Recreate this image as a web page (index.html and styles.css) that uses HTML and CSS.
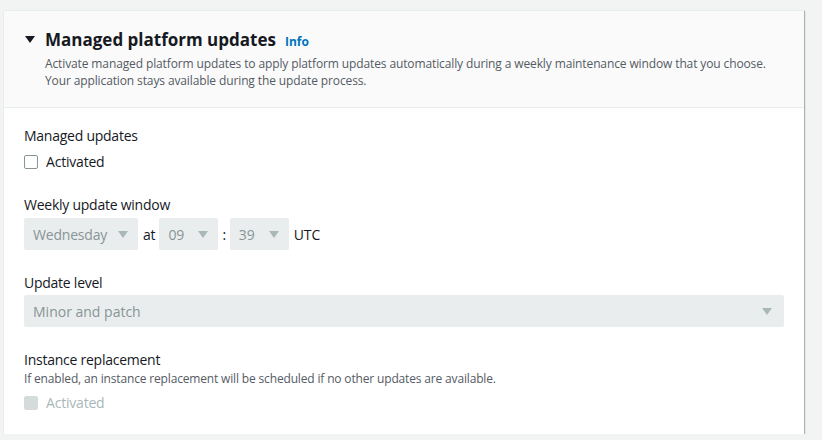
FILE: index.html
```html
<!DOCTYPE html>
<html>
<head>
<meta charset="utf-8">
<link rel="stylesheet" href="styles.css">
</head>
<body>
<div class="page">
  <section class="card">
    <header class="card-header">
      <div class="title-row">
        <svg class="caret" width="10" height="8" viewBox="0 0 10 8"><polygon points="0,0 10,0 5,7" fill="#16191f"/></svg>
        <h2 class="title">Managed platform updates</h2>
        <a class="info">Info</a>
      </div>
      <p class="desc">Activate managed platform updates to apply platform updates automatically during a weekly maintenance window that you choose.<br>Your application stays available during the update process.</p>
    </header>
    <div class="card-body">
      <div class="field">
        <div class="label">Managed updates</div>
        <label class="check">
          <span class="box"></span>
          <span>Activated</span>
        </label>
      </div>
      <div class="field">
        <div class="label">Weekly update window</div>
        <div class="window-row">
          <div class="select sel-day"><span>Wednesday</span><svg class="chev" width="10" height="7" viewBox="0 0 10 7"><polygon points="0,0 10,0 5,7" fill="#aab7b8"/></svg></div>
          <span class="sep">at</span>
          <div class="select sel-num"><span>09</span><svg class="chev" width="10" height="7" viewBox="0 0 10 7"><polygon points="0,0 10,0 5,7" fill="#aab7b8"/></svg></div>
          <span class="sep sep-colon">:</span>
          <div class="select sel-num"><span>39</span><svg class="chev" width="10" height="7" viewBox="0 0 10 7"><polygon points="0,0 10,0 5,7" fill="#aab7b8"/></svg></div>
          <span class="sep">UTC</span>
        </div>
      </div>
      <div class="field">
        <div class="label">Update level</div>
        <div class="select sel-full"><span>Minor and patch</span><svg class="chev" width="10" height="7" viewBox="0 0 10 7"><polygon points="0,0 10,0 5,7" fill="#aab7b8"/></svg></div>
      </div>
      <div class="field last">
        <div class="label">Instance replacement</div>
        <div class="hint">If enabled, an instance replacement will be scheduled if no other updates are available.</div>
        <label class="check disabled">
          <span class="box"></span>
          <span>Activated</span>
        </label>
      </div>
    </div>
  </section>
</div>
</body>
</html>
```

FILE: styles.css
```css
html, body {
  margin: 0;
  padding: 0;
  background: #f2f3f3;
  font-family: "Open Sans", "Liberation Sans", sans-serif;
  color: #16191f;
}
.page {
  padding: 10px 0 0 3px;
}
.card {
  width: 801px;
  background: #fff;
  border-top: 1px solid #eaeded;
  border-left: 1px solid #eaeded;
  box-sizing: border-box;
  box-shadow: 1px 1px 1px 0 rgba(0, 28, 36, 0.3);
}
.card-header {
  background: #fafafa;
  border-bottom: 1px solid #eaeded;
  padding: 16px 20px 18px 20px;
}
.title-row {
  display: flex;
  align-items: center;
}
.caret {
  margin: 0 10px 0 1px;
}
.title {
  margin: 0;
  font-size: 17px;
  font-weight: 700;
  line-height: 26px;
}
.info {
  font-size: 12px;
  font-weight: 700;
  color: #0073bb;
  margin-left: 9px;
  margin-top: 3px;
}
.desc {
  margin: 2px 0 0 21px;
  font-size: 12px;
  line-height: 17px;
  letter-spacing: -0.12px;
  color: #545b64;
}
.card-body {
  padding: 18px 20px 21px 20px;
}
.field {
  margin-bottom: 23px;
}
.field.last {
  margin-bottom: 0;
}
.label {
  font-size: 14px;
  line-height: 20px;
  letter-spacing: -0.25px;
}
.hint {
  font-size: 12px;
  line-height: 16px;
  letter-spacing: -0.16px;
  color: #545b64;
  margin-top: 1px;
}
.check {
  display: flex;
  align-items: center;
  gap: 8px;
  font-size: 14px;
  line-height: 20px;
  letter-spacing: -0.2px;
  margin-top: 6px;
}
.box {
  width: 14px;
  height: 14px;
  box-sizing: border-box;
  border: 1px solid #879596;
  border-radius: 2px;
  background: #fff;
}
.check.disabled {
  color: #aab7b8;
}
.check.disabled .box {
  background: #d5dbdb;
  border-color: #d5dbdb;
}
.window-row {
  display: flex;
  align-items: center;
  margin-top: 3px;
  font-size: 14px;
  letter-spacing: -0.2px;
}
.select {
  display: flex;
  align-items: center;
  justify-content: space-between;
  box-sizing: border-box;
  height: 32px;
  background: #eaeded;
  border-radius: 2px;
  color: #879596;
  font-size: 14px;
  padding: 0 10px 0 9px;
}
.sel-day { width: 114px; }
.sel-num { width: 59px; }
.sel-full { width: 760px; margin-top: 2px; padding-right: 12px; }
.sep {
  margin: 0 4px 0 5px;
}
.sep-colon {
  margin: 0 4px 0 4px;
}
```
